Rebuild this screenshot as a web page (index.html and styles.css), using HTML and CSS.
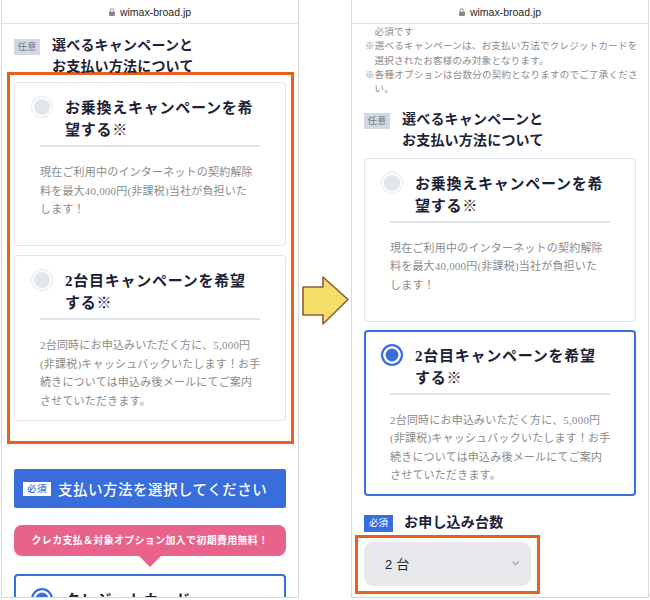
FILE: index.html
```html
<!DOCTYPE html>
<html lang="ja">
<head>
<meta charset="utf-8">
<title>選べるキャンペーン</title>
<link rel="stylesheet" href="styles.css">
</head>
<body>
<div class="stage">
  <section class="phone">
    <header class="urlbar">
      <svg class="lock" width="6" height="8" viewBox="0 0 6 8"><path d="M1.3 3.6V2.4a1.7 1.7 0 0 1 3.4 0v1.2" fill="none" stroke="#8a8a8a" stroke-width="0.9"/><rect x="0" y="3.4" width="6" height="4.6" rx="0.8" fill="#8a8a8a"/></svg>
      <span>wimax-broad.jp</span>
    </header>
    <div class="screen">
      <div class="sec-head">
        <span class="tag tag-opt">任意</span>
        <h2 class="sec-title">選べるキャンペーンと<br>お支払い方法について</h2>
      </div>
      <div class="mark mark-cards">
        <div class="cards">
          <div class="card">
            <div class="card-head"><span class="radio"></span><h3 class="card-title">お乗換えキャンペーンを希望する※</h3></div>
            <p class="card-desc">現在ご利用中のインターネットの契約解除<br>料を最大40,000円(非課税)当社が負担いた<br>します！</p>
          </div>
          <div class="card">
            <div class="card-head"><span class="radio"></span><h3 class="card-title">2台目キャンペーンを希望する※</h3></div>
            <p class="card-desc">2台同時にお申込みいただく方に、5,000円<br>(非課税)キャッシュバックいたします！お手<br>続きについては申込み後メールにてご案内<br>させていただきます。</p>
          </div>
        </div>
      </div>
      <div class="pay-bar"><span class="tag tag-req-inv">必須</span><span>支払い方法を選択してください</span></div>
      <div class="bubble">クレカ支払＆対象オプション加入で初期費用無料！</div>
      <div class="card on card-pay">
        <div class="card-head plain"><span class="radio on"></span><h3 class="card-title">クレジットカード</h3></div>
      </div>
    </div>
  </section>

  <div class="arrow-col">
    <svg class="arrow" width="48" height="50" viewBox="0 0 48 50"><path d="M2 12H22V2L47 24.5L22 49V40H2Z" fill="#f6dd68" stroke="#8a5d3b" stroke-width="1.6" stroke-linejoin="round"/></svg>
  </div>

  <section class="phone">
    <header class="urlbar">
      <svg class="lock" width="6" height="8" viewBox="0 0 6 8"><path d="M1.3 3.6V2.4a1.7 1.7 0 0 1 3.4 0v1.2" fill="none" stroke="#8a8a8a" stroke-width="0.9"/><rect x="0" y="3.4" width="6" height="4.6" rx="0.8" fill="#8a8a8a"/></svg>
      <span>wimax-broad.jp</span>
    </header>
    <div class="screen">
      <div class="notes">
        <p class="note cont">必須です</p>
        <p class="note">※選べるキャンペーンは、お支払い方法でクレジットカードを選択されたお客様のみ対象となります。</p>
        <p class="note">※各種オプションは台数分の契約となりますのでご了承ください。</p>
      </div>
      <div class="sec-head after-notes">
        <span class="tag tag-opt">任意</span>
        <h2 class="sec-title">選べるキャンペーンと<br>お支払い方法について</h2>
      </div>
      <div class="cards cards-r">
        <div class="card">
          <div class="card-head"><span class="radio"></span><h3 class="card-title">お乗換えキャンペーンを希望する※</h3></div>
          <p class="card-desc">現在ご利用中のインターネットの契約解除<br>料を最大40,000円(非課税)当社が負担いた<br>します！</p>
        </div>
        <div class="card on">
          <div class="card-head"><span class="radio on"></span><h3 class="card-title">2台目キャンペーンを希望する※</h3></div>
          <p class="card-desc">2台同時にお申込みいただく方に、5,000円<br>(非課税)キャッシュバックいたします！お手<br>続きについては申込み後メールにてご案内<br>させていただきます。</p>
        </div>
      </div>
      <div class="sec-head qty">
        <span class="tag tag-req">必須</span>
        <h2 class="sec-title">お申し込み台数</h2>
      </div>
      <div class="mark mark-select">
        <div class="select">
          <span>2台</span>
          <svg width="7" height="5" viewBox="0 0 7 5"><path d="M0.8 1L3.5 3.6L6.2 1" fill="none" stroke="#9aa0a8" stroke-width="1.1" stroke-linecap="round" stroke-linejoin="round"/></svg>
        </div>
      </div>
    </div>
  </section>
</div>
</body>
</html>
```

FILE: styles.css
```css
html, body {
  margin: 0;
  background: #fff;
}

.stage {
  display: flex;
  align-items: stretch;
  height: 600px;
  padding-left: 1px;
}

.phone {
  flex: none;
  width: 298px;
  height: 598px;
  box-sizing: border-box;
  border: 1px solid #d8d8d8;
  border-top: 0;
  overflow: hidden;
  background: #fff;
}

.urlbar {
  height: 23px;
  border-bottom: 1px solid #e4e4e4;
  display: flex;
  align-items: center;
  justify-content: center;
  gap: 5px;
  font: 10.5px "Liberation Sans", Arial, sans-serif;
  color: #1f1f1f;
}

.lock {
  display: block;
}

.arrow-col {
  flex: none;
  width: 52px;
  height: 600px;
  display: flex;
  flex-direction: column;
  justify-content: center;
}

.arrow {
  display: block;
  margin-left: 2px;
}

.screen {
  padding: 0 12px;
  font-family: "Liberation Serif", "Noto Sans CJK JP", serif;
  color: #1c2236;
}

.sec-head {
  display: flex;
  align-items: flex-start;
  gap: 12px;
  margin-top: 12px;
}

.sec-head.after-notes {
  margin-top: 14px;
}

.sec-head.qty {
  margin-top: 17.5px;
  gap: 11px;
}

.sec-title {
  margin: 0;
  font-size: 14px;
  font-weight: 700;
  line-height: 20.5px;
  letter-spacing: 0.2px;
  color: #1c2236;
}

.tag {
  flex: none;
  height: 16px;
  margin-top: 2.5px;
  font-size: 9.5px;
  line-height: 16px;
  text-align: center;
}

.tag-opt {
  width: 26px;
  background: #d3d9e2;
  color: #737985;
}

.tag-req {
  width: 29px;
  height: 17px;
  line-height: 17px;
  margin-top: 2px;
  background: #386ddb;
  color: #fff;
}

.tag-req-inv {
  width: 28px;
  height: 14px;
  line-height: 14px;
  margin-top: 0;
  background: #fff;
  color: #386ddb;
}

.mark {
  border: 3px solid #e8601c;
}

.mark-cards {
  margin: -5px -8px 0 -7px;
  padding: 7px 5px 20px 4px;
}

.cards {
  display: flex;
  flex-direction: column;
  gap: 9px;
}

.cards-r {
  gap: 8px;
  margin-top: 6.5px;
}

.card {
  box-sizing: border-box;
  min-height: 164px;
  border: 1px solid #e2e6ec;
  border-radius: 4px;
  padding: 14px 25px 10px;
  background: #fff;
}

.card.on {
  border: 2px solid #386ddb;
  padding: 13px 24px 9px;
}

.card-head {
  display: flex;
  align-items: flex-start;
  gap: 13px;
  padding-bottom: 4px;
  border-bottom: 2px solid #dfe3ea;
}

.card-head.plain {
  border-bottom: 0;
}

.radio {
  flex: none;
  width: 20px;
  height: 20px;
  box-sizing: border-box;
  border-radius: 50%;
  margin-left: -8px;
  background: #e3e6eb;
  border: 2px solid #fff;
  box-shadow: 0 0 0 1px #e8ebef;
}

.radio.on {
  width: 22px;
  height: 22px;
  margin: -1px -1px 0 -9px;
  background: #386ddb;
  border: 2px solid #386ddb;
  box-shadow: inset 0 0 0 2.5px #fff;
}

.card-title {
  flex: 1;
  margin: 0 4px 0 0;
  font-size: 15px;
  font-weight: 700;
  line-height: 22px;
  letter-spacing: 0.75px;
  color: #1c2236;
}

.card-desc {
  margin: 16px -10px 0 0;
  font-size: 11px;
  line-height: 18.5px;
  letter-spacing: 0.2px;
  color: #8b8b8b;
}

.pay-bar {
  margin-top: 25px;
  height: 39px;
  box-sizing: border-box;
  background: #386ddb;
  border-radius: 2px;
  display: flex;
  align-items: center;
  gap: 7px;
  padding: 0 9px;
  color: #fff;
  font-size: 14.5px;
  font-weight: 500;
  letter-spacing: 0.5px;
}

.bubble {
  position: relative;
  margin-top: 17px;
  height: 31px;
  line-height: 31px;
  border-radius: 8px;
  background: #e8628b;
  color: #fff;
  font-size: 10px;
  font-weight: 700;
  letter-spacing: 0.3px;
  text-align: center;
}

.bubble::after {
  content: "";
  position: absolute;
  left: 50%;
  top: 100%;
  transform: translateX(-50%);
  border-left: 11px solid transparent;
  border-right: 11px solid transparent;
  border-top: 11px solid #e8628b;
}

.card-pay {
  margin-top: 18px;
}

.notes {
  margin: 1px -8px 0 1px;
  font-size: 9.5px;
  line-height: 14.3px;
  letter-spacing: 0.25px;
  color: #8a8a8a;
}

.note {
  margin: 0;
  padding-left: 1em;
  text-indent: -1em;
}

.note.cont {
  text-indent: 0;
}

.mark-select {
  width: fit-content;
  margin: 1px 0 0 -9px;
  padding: 4px 6px 5px;
}

.select {
  width: 167px;
  height: 44px;
  box-sizing: border-box;
  background: #e6e8ec;
  border-radius: 9px;
  display: flex;
  align-items: center;
  justify-content: space-between;
  padding: 0 12px 0 21px;
  font: 13px "Liberation Sans", "Noto Sans CJK JP", sans-serif;
  letter-spacing: 4px;
  color: #222;
}

.select svg {
  display: block;
}
```
